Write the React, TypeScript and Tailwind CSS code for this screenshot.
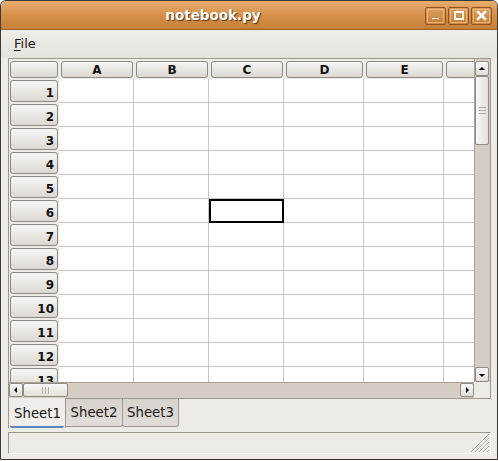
import React from "react";

const cols = [
  { l: "A", w: "w-[75px]" },
  { l: "B", w: "w-[75px]" },
  { l: "C", w: "w-[75px]" },
  { l: "D", w: "w-[80px]" },
  { l: "E", w: "w-[80px]" },
  { l: "F", w: "w-[80px]" },
];

const rows = Array.from({ length: 13 }, (_, i) => i + 1);

const btn =
  "h-full w-full rounded-[3px] border border-[#8e8983] bg-gradient-to-b from-[#f7f6f4] to-[#dcd7d1] flex items-center text-[12px] font-bold text-[#111111] leading-none";

function TitleButton({ children }: { children: React.ReactNode }) {
  return (
    <div className="w-[21px] h-[18px] rounded-[2px] border border-[#8a5522] p-px">
      <div className="w-full h-full rounded-[1px] border border-[#eab57c] bg-gradient-to-b from-[#dc9c5a] to-[#c98137] flex items-center justify-center">
        {children}
      </div>
    </div>
  );
}

function SbButton({ dir }: { dir: "up" | "down" | "left" | "right" }) {
  const tri =
    dir === "up"
      ? "M2 6 L8 6 L5 3 Z"
      : dir === "down"
      ? "M2 4 L8 4 L5 7 Z"
      : dir === "left"
      ? "M6 2 L6 8 L3 5 Z"
      : "M4 2 L4 8 L7 5 Z";
  return (
    <div className="w-full h-full rounded-[2px] border border-[#8f8a84] bg-gradient-to-b from-[#f8f7f5] to-[#e2ddd7] flex items-center justify-center">
      <svg width="10" height="10" viewBox="0 0 10 10">
        <path d={tri} fill="#000" />
      </svg>
    </div>
  );
}

export default function App() {
  return (
    <div className="w-[498px] h-[461px] bg-white font-['DejaVu_Sans','Liberation_Sans',sans-serif]">
      <div className="w-[498px] h-[460px] flex flex-col border border-[#3d3a36] rounded-t-[6px] overflow-hidden bg-[#eeebe7]">
        {/* Title bar */}
        <div className="h-[29px] shrink-0 flex items-center bg-gradient-to-b from-[#e8ad70] via-[#d6904a] to-[#c77f36] border-b border-[#9a6329]">
          <div className="flex-1 text-center text-[13.5px] font-bold text-white [text-shadow:1px_1px_1px_#5a3510] pt-px">
            notebook.py
          </div>
          <div className="flex gap-[2px] pr-[5px] pt-[1px]">
            <TitleButton>
              <div className="w-[9px] h-[3px] bg-white mt-[6px] border border-[#c98a4a]" />
            </TitleButton>
            <TitleButton>
              <div className="w-[10px] h-[9px] border-2 border-white" />
            </TitleButton>
            <TitleButton>
              <svg width="11" height="11" viewBox="0 0 11 11">
                <path d="M2 2 L9 9 M9 2 L2 9" stroke="#fff" strokeWidth="2.6" strokeLinecap="square" />
              </svg>
            </TitleButton>
          </div>
        </div>

        {/* Menu bar */}
        <div className="h-[28px] shrink-0 flex items-center pl-[13px] bg-gradient-to-b from-[#f0ede9] to-[#e6e2dd] text-[13px] text-[#1a1a1a]">
          <span>
            <span className="underline underline-offset-2">F</span>ile
          </span>
        </div>

        {/* Content */}
        <div className="flex-1 flex flex-col pl-[7px] pr-[6px]">
          {/* Scrolled window */}
          <div className="h-[341px] shrink-0 border border-[#9e978e] flex flex-col">
            <div className="h-[323px] flex">
              <div className="w-[465px] overflow-hidden">
                {/* Header row */}
                <div className="flex h-[20px]">
                  <div className="w-[50px] shrink-0 pt-[2px] pb-px px-px">
                    <div className={btn} />
                  </div>
                  {cols.map((c) => (
                    <div key={c.l} className={`${c.w} shrink-0 pt-[2px] pb-px pl-[2px] pr-px`}>
                      <div className={`${btn} justify-center pt-px`}>{c.l}</div>
                    </div>
                  ))}
                </div>
                {rows.map((r) => (
                  <div key={r} className="flex h-[24px]">
                    <div className="w-[50px] shrink-0 p-px">
                      <div className={`${btn} justify-end pr-[3px] pt-[3px]`}>{r}</div>
                    </div>
                    {cols.map((c) => (
                      <div
                        key={c.l}
                        className={`${c.w} shrink-0 bg-white border-r border-b border-[#c6c6c6] relative`}
                      >
                        {r === 6 && c.l === "C" && (
                          <div className="absolute left-0 top-0 right-[-1px] bottom-[-1px] border-2 border-black" />
                        )}
                      </div>
                    ))}
                  </div>
                ))}
              </div>
              {/* Vertical scrollbar */}
              <div className="w-[16px] pt-[2px] pr-px flex flex-col bg-[#d5cdc4] border-l border-[#a8a097]">
                <div className="h-[15px]">
                  <SbButton dir="up" />
                </div>
                <div className="h-[69px] rounded-[2px] border border-[#8f8a84] bg-gradient-to-r from-[#f8f7f5] to-[#e4dfd9] flex items-center justify-center">
                  <div className="flex flex-col gap-[2px]">
                    <div className="w-[7px] h-px bg-[#b5aea6]" />
                    <div className="w-[7px] h-px bg-[#b5aea6]" />
                    <div className="w-[7px] h-px bg-[#b5aea6]" />
                  </div>
                </div>
                <div className="flex-1" />
                <div className="h-[15px]">
                  <SbButton dir="down" />
                </div>
              </div>
            </div>
            {/* Horizontal scrollbar row */}
            <div className="h-[16px] flex">
              <div className="w-[465px] flex bg-[#d5cdc4] pb-px border-t border-[#a8a097]">
                <div className="w-[14px]">
                  <SbButton dir="left" />
                </div>
                <div className="w-[45px] rounded-[2px] border border-[#8f8a84] bg-gradient-to-b from-[#f8f7f5] to-[#e4dfd9] flex items-center justify-center">
                  <div className="flex gap-[2px]">
                    <div className="w-px h-[7px] bg-[#b5aea6]" />
                    <div className="w-px h-[7px] bg-[#b5aea6]" />
                    <div className="w-px h-[7px] bg-[#b5aea6]" />
                  </div>
                </div>
                <div className="flex-1" />
                <div className="w-[14px]">
                  <SbButton dir="right" />
                </div>
              </div>
              <div className="flex-1 bg-[#eeebe7]" />
            </div>
          </div>

          {/* Tabs */}
          <div className="h-[30px] shrink-0 flex items-start text-[13.3px] text-[#1a1a1a]">
            <div className="w-[58px] h-[30px] -mt-px flex flex-col border-l border-r border-[#9e978e] bg-[#efece9]">
              <div className="flex-1 flex items-center justify-center pt-[4px] pl-px">Sheet1</div>
              <div className="h-[2px] mx-[1px] bg-[#5b87bd] rounded-b-[2px]" />
            </div>
            <div className="w-[57px] h-[28px] flex items-center justify-center border-r border-b border-[#9e978e] rounded-br-[3px] bg-gradient-to-b from-[#d8d3cd] to-[#e2ddd8]">
              Sheet2
            </div>
            <div className="w-[57px] h-[28px] flex items-center justify-center border-r border-b border-l border-[#9e978e] rounded-b-[3px] -ml-px bg-gradient-to-b from-[#d8d3cd] to-[#e2ddd8]">
              Sheet3
            </div>
          </div>

          {/* Status bar */}
          <div className="mt-[3px] h-[22px] shrink-0 border-t border-l border-[#9e978e] border-r border-b border-r-[#ffffff] border-b-[#ffffff] flex justify-end items-end">
            <svg width="22" height="20" viewBox="0 0 22 20">
              {[0, 4, 8, 12, 16].map((o) => (
                <path key={o} d={`M${21 - o - 2} 19 L21 ${19 - o - 2}`} stroke="#b3aca4" strokeWidth="1" />
              ))}
              {[0, 4, 8, 12, 16].map((o) => (
                <path key={"w" + o} d={`M${21 - o - 1} 19 L21 ${19 - o - 1}`} stroke="#ffffff" strokeWidth="1" />
              ))}
            </svg>
          </div>
        </div>
      </div>
    </div>
  );
}
